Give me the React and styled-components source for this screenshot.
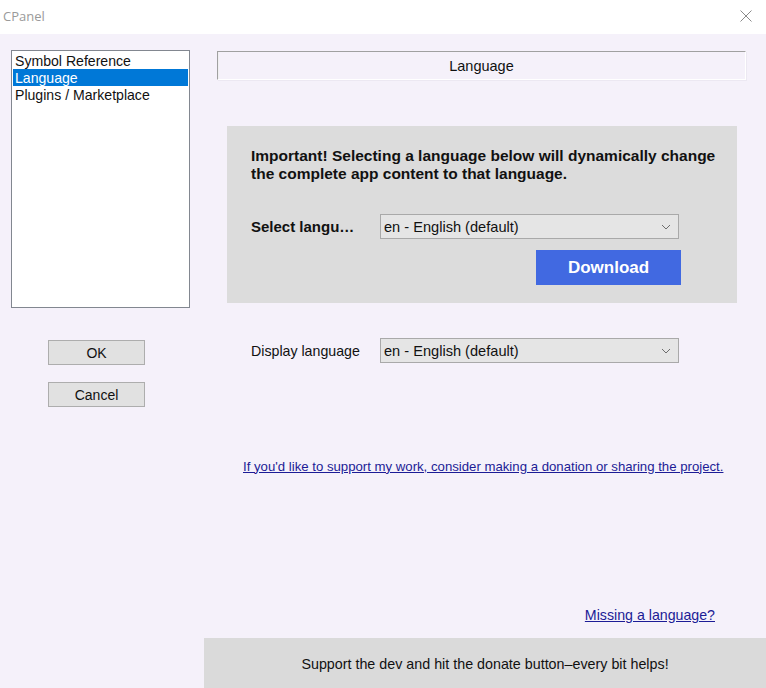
import React from "react";
import styled, { createGlobalStyle } from "styled-components";

const GlobalStyle = createGlobalStyle`
    html, body {
        margin: 0;
        padding: 0;
        background: #f5f1fa;
    }
    * { box-sizing: border-box; }
`;

const Window = styled.div`
    width: 766px;
    height: 688px;
    display: flex;
    flex-direction: column;
    background: #f5f1fa;
    font-family: "Liberation Sans", Arial, sans-serif;
    color: #111;
    overflow: hidden;
`;

const TitleBar = styled.div`
    height: 34px;
    flex-shrink: 0;
    background: #ffffff;
    display: flex;
    align-items: center;
    justify-content: space-between;
    padding: 0 14px 2px 3px;
    font-family: "Open Sans", "Noto Sans", sans-serif;
    font-size: 13px;
    color: #9a9a9a;
`;

const Body = styled.div`
    flex: 1;
    display: flex;
`;

const Sidebar = styled.div`
    width: 204px;
    flex-shrink: 0;
    padding: 16px 0 0 11px;
    display: flex;
    flex-direction: column;
`;

const ListBox = styled.ul`
    width: 179px;
    height: 258px;
    margin: 0;
    padding: 1px;
    list-style: none;
    background: #ffffff;
    border: 1px solid #828790;
`;

const ListItem = styled.li`
    height: 17px;
    line-height: 18px;
    padding-left: 2px;
    font-size: 14.1px;
    white-space: nowrap;
    background: ${p => (p.selected ? "#0078d7" : "transparent")};
    color: ${p => (p.selected ? "#ffffff" : "#111")};
`;

const ButtonStack = styled.div`
    display: flex;
    flex-direction: column;
    gap: 17px;
    margin: 32px 0 0 37px;
`;

const DialogButton = styled.button`
    width: 97px;
    height: 25px;
    background: #e1e1e1;
    border: 1px solid #adadad;
    font-family: "Liberation Sans", Arial, sans-serif;
    font-size: 14px;
    color: #111;
    padding: 0;
`;

const Main = styled.div`
    flex: 1;
    display: flex;
    flex-direction: column;
`;

const SectionHeader = styled.div`
    width: 529px;
    height: 29px;
    margin: 17px 0 0 13px;
    display: flex;
    align-items: center;
    justify-content: center;
    font-size: 14.5px;
    border-top: 1px solid #a0a0a0;
    border-left: 1px solid #a0a0a0;
    border-right: 1px solid #ffffff;
    border-bottom: 1px solid #ffffff;
    box-shadow: inset 1px 0 0 #f0f0f0, 1px 1px 0 #ece8f2;
`;

const InfoPanel = styled.div`
    width: 510px;
    height: 177px;
    margin: 46px 0 0 23px;
    padding: 21px 0 0 24px;
    background: #dcdcdc;
    display: flex;
    flex-direction: column;
`;

const Notice = styled.p`
    margin: 0;
    font-size: 15.5px;
    font-weight: bold;
    line-height: 18px;
    color: #111;
    white-space: nowrap;
`;

const FieldRow = styled.div`
    display: flex;
    align-items: center;
    height: 25px;
    margin: ${p => p.$top || 0}px 0 0 ${p => p.$left || 0}px;
`;

const FieldLabel = styled.span`
    width: 129px;
    flex-shrink: 0;
    font-size: ${p => (p.$bold ? "15px" : "14.2px")};
    font-weight: ${p => (p.$bold ? "bold" : "normal")};
    white-space: nowrap;
`;

const Dropdown = styled.div`
    width: 299px;
    height: 25px;
    background: #e5e5e5;
    border: 1px solid #a9a9a9;
    display: flex;
    align-items: center;
    justify-content: space-between;
    padding: 0 7px 0 3px;
    font-size: 14.6px;
`;

const DownloadButton = styled.button`
    align-self: flex-end;
    width: 145px;
    height: 35px;
    margin: 11px 56px 0 0;
    background: #4169e1;
    border: none;
    color: #ffffff;
    font-family: "Liberation Sans", Arial, sans-serif;
    font-size: 17px;
    font-weight: bold;
`;

const Link = styled.a`
    font-size: ${p => p.$size || 13.2}px;
    color: #1c1c96;
    text-decoration: underline;
    cursor: pointer;
    white-space: nowrap;
`;

const LinkRow = styled.div`
    display: flex;
    justify-content: ${p => (p.$right ? "flex-end" : "flex-start")};
    margin: ${p => p.$top}px ${p => p.$padRight || 0}px 0 ${p => p.$padLeft || 0}px;
    height: 16px;
    align-items: center;
`;

const Footer = styled.div`
    margin-top: auto;
    height: 50px;
    background: #dadada;
    display: flex;
    align-items: center;
    justify-content: center;
    font-size: 14.3px;
    color: #111;
    padding-top: 2px;
`;

const Chevron = () => (
    <svg width="10" height="6" viewBox="0 0 10 6">
        <path d="M1 1 L5 5 L9 1" fill="none" stroke="#6d6d6d" strokeWidth="1" />
    </svg>
);

const CloseIcon = () => (
    <svg width="12" height="12" viewBox="0 0 12 12">
        <path d="M0.5 0.5 L11.5 11.5 M11.5 0.5 L0.5 11.5" stroke="#8a8a8a" strokeWidth="1" />
    </svg>
);

export default function App() {
    const pages = ["Symbol Reference", "Language", "Plugins / Marketplace"];

    return (
        <Window>
            <GlobalStyle />
            <TitleBar>
                <span>CPanel</span>
                <CloseIcon />
            </TitleBar>
            <Body>
                <Sidebar>
                    <ListBox>
                        {pages.map(p => (
                            <ListItem key={p} selected={p === "Language"}>{p}</ListItem>
                        ))}
                    </ListBox>
                    <ButtonStack>
                        <DialogButton>OK</DialogButton>
                        <DialogButton>Cancel</DialogButton>
                    </ButtonStack>
                </Sidebar>

                <Main>
                    <SectionHeader>Language</SectionHeader>

                    <InfoPanel>
                        <Notice>
                            Important! Selecting a language below will dynamically change<br />
                            the complete app content to that language.
                        </Notice>
                        <FieldRow $top={31}>
                            <FieldLabel $bold>Select langu…</FieldLabel>
                            <Dropdown>
                                <span>en - English (default)</span>
                                <Chevron />
                            </Dropdown>
                        </FieldRow>
                        <DownloadButton>Download</DownloadButton>
                    </InfoPanel>

                    <FieldRow $top={35} $left={47}>
                        <FieldLabel>Display language</FieldLabel>
                        <Dropdown>
                            <span>en - English (default)</span>
                            <Chevron />
                        </Dropdown>
                    </FieldRow>

                    <LinkRow $top={95} $padLeft={39}>
                        <Link>If you'd like to support my work, consider making a donation or sharing the project.</Link>
                    </LinkRow>

                    <LinkRow $top={133} $right $padRight={51}>
                        <Link $size={14.2}>Missing a language?</Link>
                    </LinkRow>

                    <Footer>Support the dev and hit the donate button–every bit helps!</Footer>
                </Main>
            </Body>
        </Window>
    );
}
